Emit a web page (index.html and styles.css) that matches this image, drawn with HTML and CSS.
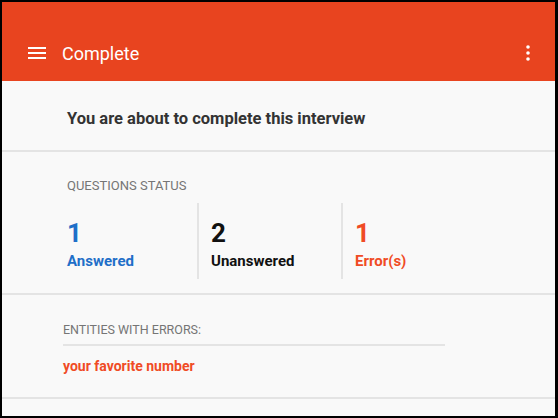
FILE: index.html
```html
<!DOCTYPE html>
<html>
<head>
<meta charset="utf-8">
<link rel="stylesheet" href="styles.css">
</head>
<body>
<div class="frame">
  <header class="appbar">
    <svg class="menu" width="18" height="14" viewBox="0 0 18 14"><rect x="0" y="1" width="18" height="2" fill="#fff"/><rect x="0" y="6" width="18" height="2" fill="#fff"/><rect x="0" y="11" width="18" height="2" fill="#fff"/></svg>
    <div class="title">Complete</div>
    <svg class="more" width="4" height="16" viewBox="0 0 4 16"><circle cx="2" cy="2" r="1.8" fill="#fff"/><circle cx="2" cy="8" r="1.8" fill="#fff"/><circle cx="2" cy="14" r="1.8" fill="#fff"/></svg>
  </header>
  <section class="intro">You are about to complete this interview</section>
  <section class="status">
    <div class="label">QUESTIONS STATUS</div>
    <div class="stats">
      <div class="stat answered"><div class="num">1</div><div class="cap">Answered</div></div>
      <div class="stat unanswered"><div class="num">2</div><div class="cap">Unanswered</div></div>
      <div class="stat errors"><div class="num">1</div><div class="cap">Error(s)</div></div>
    </div>
  </section>
  <section class="entities">
    <div class="elabel">ENTITIES WITH ERRORS:</div>
    <div class="entity">your favorite number</div>
  </section>
</div>
</body>
</html>
```
FILE: styles.css
```css
html, body { margin: 0; padding: 0; }
body { width: 558px; height: 418px; overflow: hidden; font-family: Roboto, "Noto Sans", sans-serif; }
.frame {
  box-sizing: border-box;
  width: 558px; height: 418px;
  border-style: solid; border-color: #000;
  border-width: 2px 3px 2px 2px;
  background: #f9f9f9;
}
.appbar {
  height: 79px; box-sizing: border-box;
  background: #e8441f;
  display: flex; align-items: center;
  padding: 22px 0 0 26px;
  color: #fff;
}
.title { font-size: 18px; margin-left: 16px; flex: 1; margin-top: 2px; }
.more { margin-right: 25px; }
.intro {
  height: 71px; box-sizing: border-box;
  padding: 28px 0 0 65px;
  font-size: 16.5px; font-weight: 700; color: #333;
  border-bottom: 2px solid #e4e4e4;
}
.status {
  height: 143px; box-sizing: border-box;
  padding: 26px 0 0 65px;
  border-bottom: 2px solid #e4e4e4;
}
.label { font-size: 13px; color: #757575; }
.stats { display: grid; grid-template-columns: 130px 144px 144px; margin-top: 10px; }
.stat { height: 76px; box-sizing: border-box; padding-top: 15px; }
.stat + .stat { border-left: 2px solid #e4e4e4; padding-left: 12px; }
.num { font-size: 26px; font-weight: 700; line-height: 30px; }
.cap { font-size: 15px; font-weight: 700; margin-top: 4px; }
.answered { color: #1f6fc8; }
.unanswered { color: #111; }
.errors { color: #f04b25; }
.entities {
  height: 104px; box-sizing: border-box;
  padding: 27px 0 0 61px;
  border-bottom: 2px solid #e4e4e4;
}
.elabel { font-size: 12.5px; color: #757575; width: 382px; padding-bottom: 7px; border-bottom: 2px solid #e4e4e4; }
.entity { font-size: 14px; font-weight: 700; color: #f04b25; margin-top: 12px; }
```
